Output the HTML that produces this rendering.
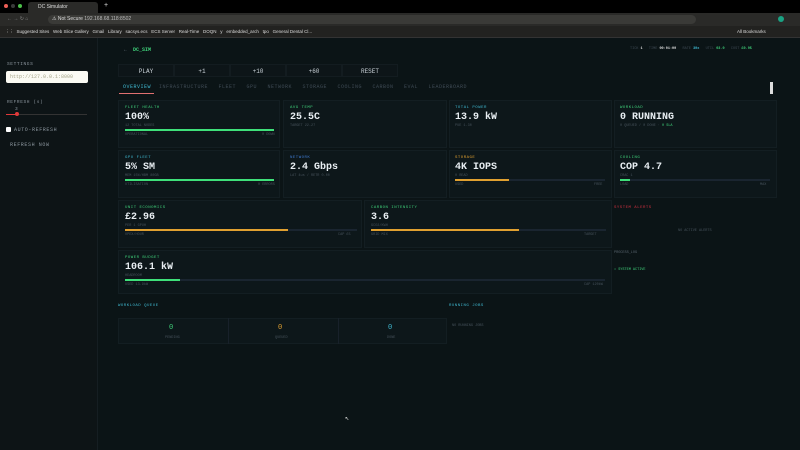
<!DOCTYPE html>
<html><head><meta charset="utf-8"><style>
*{box-sizing:border-box;margin:0;padding:0}
body{width:800px;height:450px;overflow:hidden;background:#0b1416;font-family:"Liberation Mono",monospace;color:#cfd6dc;position:relative}
.a{position:absolute}
.tabbar{left:0;top:0;width:800px;height:13px;background:#000}
.tool{left:0;top:13px;width:800px;height:13px;background:#2a2a28}
.bm{left:0;top:26px;width:800px;height:12px;background:#222220;border-bottom:1px solid #333}
.t{font-family:"Liberation Sans",sans-serif;font-size:5px;color:#ddd;white-space:nowrap}
.side{left:0;top:38px;width:98px;height:412px;background:#0d1416;border-right:1px solid #151e22}
.lbl{font-size:4.5px;letter-spacing:.6px;color:#8a949c}
.card{background:#0d171a;border:1px solid #131e22}
.ct{font-size:4px;letter-spacing:.5px}
.cv{font-size:10px;font-weight:bold;color:#e8eef2}
.cs{font-size:3.5px;color:#46525b}
.bar{height:2px;background:#1a2530}
.btn{font-size:6px;color:#c8d0d6;text-align:center;top:64px;height:13px;line-height:13px;background:#0d1518;border:1px solid #131c20}
.tab{font-size:5px;top:84px;color:#3e4a54;letter-spacing:.5px}
</style></head><body>
<div class="a tabbar"></div>
<div class="a" style="left:4px;top:4px;width:4px;height:4px;border-radius:50%;background:#ed5f57"></div>
<div class="a" style="left:11px;top:4px;width:4px;height:4px;border-radius:50%;background:#3a3a3a"></div>
<div class="a" style="left:18px;top:4px;width:4px;height:4px;border-radius:50%;background:#4cc14a"></div>
<div class="a" style="left:28px;top:2px;width:70px;height:11px;background:#2a2a28;border-radius:3px 3px 0 0"></div>
<div class="a t" style="left:38px;top:4px">DC Simulator</div>
<div class="a t" style="left:104px;top:2px;font-size:7px">+</div>
<div class="a tool"></div>
<div class="a" style="left:48px;top:15px;width:648px;height:9px;background:#3a3a37;border-radius:5px"></div>
<div class="a t" style="left:7px;top:16px;color:#888">←  →  ↻  ⌂</div>
<div class="a t" style="left:52px;top:16px">⚠ Not Secure <span style="color:#bbb">192.168.68.118:8502</span></div>
<div class="a" style="left:778px;top:16px;width:6px;height:6px;border-radius:50%;background:#1aa384"></div>
<div class="a bm"></div>
<div class="a t" style="left:5px;top:29px;font-size:4.5px">⋮⋮ &nbsp;Suggested Sites &nbsp; Web Slice Gallery &nbsp; Gmail &nbsp; Library &nbsp; sacsys.ecs &nbsp; ECS Server &nbsp; Real-Time &nbsp; DOQN &nbsp; y &nbsp; embedded_arch &nbsp; tpo &nbsp; General Dental Cl...</div>
<div class="a t" style="left:737px;top:29px;font-size:4.5px">All Bookmarks</div>

<div class="a side"></div>
<div class="a lbl" style="left:7px;top:62px">SETTINGS</div>
<div class="a" style="left:6px;top:71px;width:82px;height:12px;background:#fbfbf4;border-radius:2px"></div>
<div class="a" style="left:10px;top:74px;font-size:5px;color:#a5a58a">http://127.0.0.1:8000</div>
<div class="a lbl" style="left:7px;top:100px">REFRESH (s)</div>
<div class="a lbl" style="left:15px;top:107px">3</div>
<div class="a" style="left:6px;top:114px;width:81px;height:1px;background:#333"></div>
<div class="a" style="left:6px;top:114px;width:10px;height:1px;background:#e03a3a"></div>
<div class="a" style="left:15px;top:112px;width:4px;height:4px;border-radius:50%;background:#e03a3a"></div>
<div class="a" style="left:6px;top:127px;width:5px;height:5px;background:#fff;border-radius:1px"></div>
<div class="a lbl" style="left:14px;top:127px;font-size:5px">AUTO-REFRESH</div>
<div class="a lbl" style="left:10px;top:142px;font-size:5px">REFRESH NOW</div>

<div class="a" style="left:124px;top:47px;font-size:5px;color:#6b7a85">←&nbsp; <span style="color:#3fd07a;font-weight:bold">DC_SIM</span></div>
<div class="a" style="left:630px;top:47px;font-size:3.5px;color:#3e4a54;white-space:nowrap">TICK <b style="color:#ddd">1</b> &nbsp; TIME <b style="color:#ddd">00:01:00</b> &nbsp; RATE <b style="color:#3fb8d0">30x</b> &nbsp; UTIL <b style="color:#3fd07a">03.0</b> &nbsp; COST <b style="color:#3fd07a">£0.95</b></div>

<div class="a btn" style="left:118px;width:56px">PLAY</div>
<div class="a btn" style="left:174px;width:56px">+1</div>
<div class="a btn" style="left:230px;width:56px">+10</div>
<div class="a btn" style="left:286px;width:56px">+60</div>
<div class="a btn" style="left:342px;width:56px">RESET</div>

<div class="a tab" style="left:123px;color:#3fb8d0">OVERVIEW</div>
<div class="a" style="left:119px;top:93px;width:35px;height:1px;background:#e07070"></div>
<div class="a tab" style="left:159px">INFRASTRUCTURE &nbsp;&nbsp;FLEET &nbsp;&nbsp;GPU &nbsp;&nbsp;NETWORK &nbsp;&nbsp;STORAGE &nbsp;&nbsp;COOLING &nbsp;&nbsp;CARBON &nbsp;&nbsp;EVAL &nbsp;&nbsp;LEADERBOARD</div>
<div class="a" style="left:770px;top:82px;width:3px;height:12px;background:#ddd"></div>

<!-- row1 -->
<div class="a card" style="left:118px;top:100px;width:162px;height:48px"></div>
<div class="a ct" style="left:125px;top:106px;color:#3fd07a">FLEET HEALTH</div>
<div class="a cv" style="left:125px;top:112px">100%</div>
<div class="a cs" style="left:125px;top:124px">12 TOTAL NODES</div>
<div class="a bar" style="left:125px;top:129px;width:149px;background:#3fe07a"></div>
<div class="a cs" style="left:125px;top:133px">OPERATIONAL</div><div class="a cs" style="left:262px;top:133px">0 DOWN</div>
<div class="a card" style="left:283px;top:100px;width:164px;height:48px"></div>
<div class="a ct" style="left:290px;top:106px;color:#3fd07a">AVG TEMP</div>
<div class="a cv" style="left:290px;top:112px">25.5C</div>
<div class="a cs" style="left:290px;top:124px">TARGET 22-27</div>
<div class="a card" style="left:449px;top:100px;width:163px;height:48px"></div>
<div class="a ct" style="left:455px;top:106px;color:#3fb8d0">TOTAL POWER</div>
<div class="a cv" style="left:455px;top:112px">13.9 kW</div>
<div class="a cs" style="left:455px;top:124px">PUE 1.30</div>
<div class="a card" style="left:614px;top:100px;width:163px;height:48px"></div>
<div class="a ct" style="left:620px;top:106px;color:#3fd07a">WORKLOAD</div>
<div class="a cv" style="left:620px;top:112px">0 RUNNING</div>
<div class="a cs" style="left:620px;top:124px">0 QUEUED / 0 DONE · <span style="color:#3fd07a">0 SLA</span></div>
<!-- row2 -->
<div class="a card" style="left:118px;top:150px;width:162px;height:48px"></div>
<div class="a ct" style="left:125px;top:156px;color:#3fb8d0">GPU FLEET</div>
<div class="a cv" style="left:125px;top:162px">5% SM</div>
<div class="a cs" style="left:125px;top:174px">MEM 15%/HBM 80GB</div>
<div class="a bar" style="left:125px;top:179px;width:149px;background:#3fe07a"></div>
<div class="a cs" style="left:125px;top:183px">UTILISATION</div><div class="a cs" style="left:258px;top:183px">0 ERRORS</div>
<div class="a card" style="left:283px;top:150px;width:164px;height:48px"></div>
<div class="a ct" style="left:290px;top:156px;color:#3f7ad0">NETWORK</div>
<div class="a cv" style="left:290px;top:162px">2.4 Gbps</div>
<div class="a cs" style="left:290px;top:174px">LAT 4us / RETR 0.00</div>
<div class="a card" style="left:449px;top:150px;width:163px;height:48px"></div>
<div class="a ct" style="left:455px;top:156px;color:#e0a030">STORAGE</div>
<div class="a cv" style="left:455px;top:162px">4K IOPS</div>
<div class="a cs" style="left:455px;top:174px">0 READ</div>
<div class="a bar" style="left:455px;top:179px;width:150px"></div>
<div class="a bar" style="left:455px;top:179px;width:54px;background:#e0a030"></div>
<div class="a cs" style="left:455px;top:183px">USED</div><div class="a cs" style="left:594px;top:183px">FREE</div>
<div class="a card" style="left:614px;top:150px;width:163px;height:48px"></div>
<div class="a ct" style="left:620px;top:156px;color:#3fd07a">COOLING</div>
<div class="a cv" style="left:620px;top:162px">COP 4.7</div>
<div class="a cs" style="left:620px;top:174px">CRAC 1</div>
<div class="a bar" style="left:620px;top:179px;width:150px"></div>
<div class="a bar" style="left:620px;top:179px;width:10px;background:#3fe07a"></div>
<div class="a cs" style="left:620px;top:183px">LOAD</div><div class="a cs" style="left:760px;top:183px">MAX</div>
<!-- row3 -->
<div class="a card" style="left:118px;top:200px;width:244px;height:48px"></div>
<div class="a ct" style="left:125px;top:206px;color:#3fd07a">UNIT ECONOMICS</div>
<div class="a cv" style="left:125px;top:212px">£2.96</div>
<div class="a cs" style="left:125px;top:224px">PER 1 GPUH</div>
<div class="a bar" style="left:125px;top:229px;width:232px"></div>
<div class="a bar" style="left:125px;top:229px;width:163px;background:#e0a030"></div>
<div class="a cs" style="left:125px;top:233px">OPEX/HOUR</div><div class="a cs" style="left:338px;top:233px">CAP £5</div>
<div class="a card" style="left:364px;top:200px;width:248px;height:48px"></div>
<div class="a ct" style="left:371px;top:206px;color:#3fd07a">CARBON INTENSITY</div>
<div class="a cv" style="left:371px;top:212px">3.6</div>
<div class="a cs" style="left:371px;top:224px">GCO2/KWH</div>
<div class="a bar" style="left:371px;top:229px;width:235px"></div>
<div class="a bar" style="left:371px;top:229px;width:148px;background:#e0a030"></div>
<div class="a cs" style="left:371px;top:233px">GRID MIX</div><div class="a cs" style="left:584px;top:233px">TARGET</div>
<div class="a" style="left:614px;top:206px;font-size:4px;letter-spacing:.5px;color:#d03040">SYSTEM ALERTS</div>
<div class="a cs" style="left:678px;top:229px">NO ACTIVE ALERTS</div>
<div class="a cs" style="left:614px;top:251px;color:#5a6670">PROCESS_LOG</div>
<div class="a cs" style="left:614px;top:268px;color:#3fd07a">• SYSTEM ACTIVE</div>
<!-- row4 -->
<div class="a card" style="left:118px;top:250px;width:494px;height:44px"></div>
<div class="a ct" style="left:125px;top:256px;color:#3fd07a">POWER BUDGET</div>
<div class="a cv" style="left:125px;top:262px">106.1 kW</div>
<div class="a cs" style="left:125px;top:274px">HEADROOM</div>
<div class="a bar" style="left:125px;top:279px;width:480px"></div>
<div class="a bar" style="left:125px;top:279px;width:55px;background:#3fe07a"></div>
<div class="a cs" style="left:125px;top:283px">USED 13.9kW</div><div class="a cs" style="left:584px;top:283px">CAP 120kW</div>
<!-- queue -->
<div class="a ct" style="left:118px;top:304px;color:#3fb8d0">WORKLOAD QUEUE</div>
<div class="a ct" style="left:449px;top:304px;color:#3fb8d0">RUNNING JOBS</div>
<div class="a card" style="left:118px;top:318px;width:329px;height:26px"></div>
<div class="a" style="left:228px;top:318px;width:1px;height:26px;background:#18212a"></div>
<div class="a" style="left:338px;top:318px;width:1px;height:26px;background:#18212a"></div>
<div class="a" style="left:169px;top:324px;font-size:7px;color:#3fd07a">0</div>
<div class="a" style="left:278px;top:324px;font-size:7px;color:#e0a030">0</div>
<div class="a" style="left:388px;top:324px;font-size:7px;color:#3fb8d0">0</div>
<div class="a cs" style="left:165px;top:336px">PENDING</div>
<div class="a cs" style="left:275px;top:336px">QUEUED</div>
<div class="a cs" style="left:387px;top:336px">DONE</div>
<div class="a cs" style="left:452px;top:324px">NO RUNNING JOBS</div>
<div class="a" style="left:345px;top:414px;font-size:7px;color:#ddd">↖</div>
</body></html>
